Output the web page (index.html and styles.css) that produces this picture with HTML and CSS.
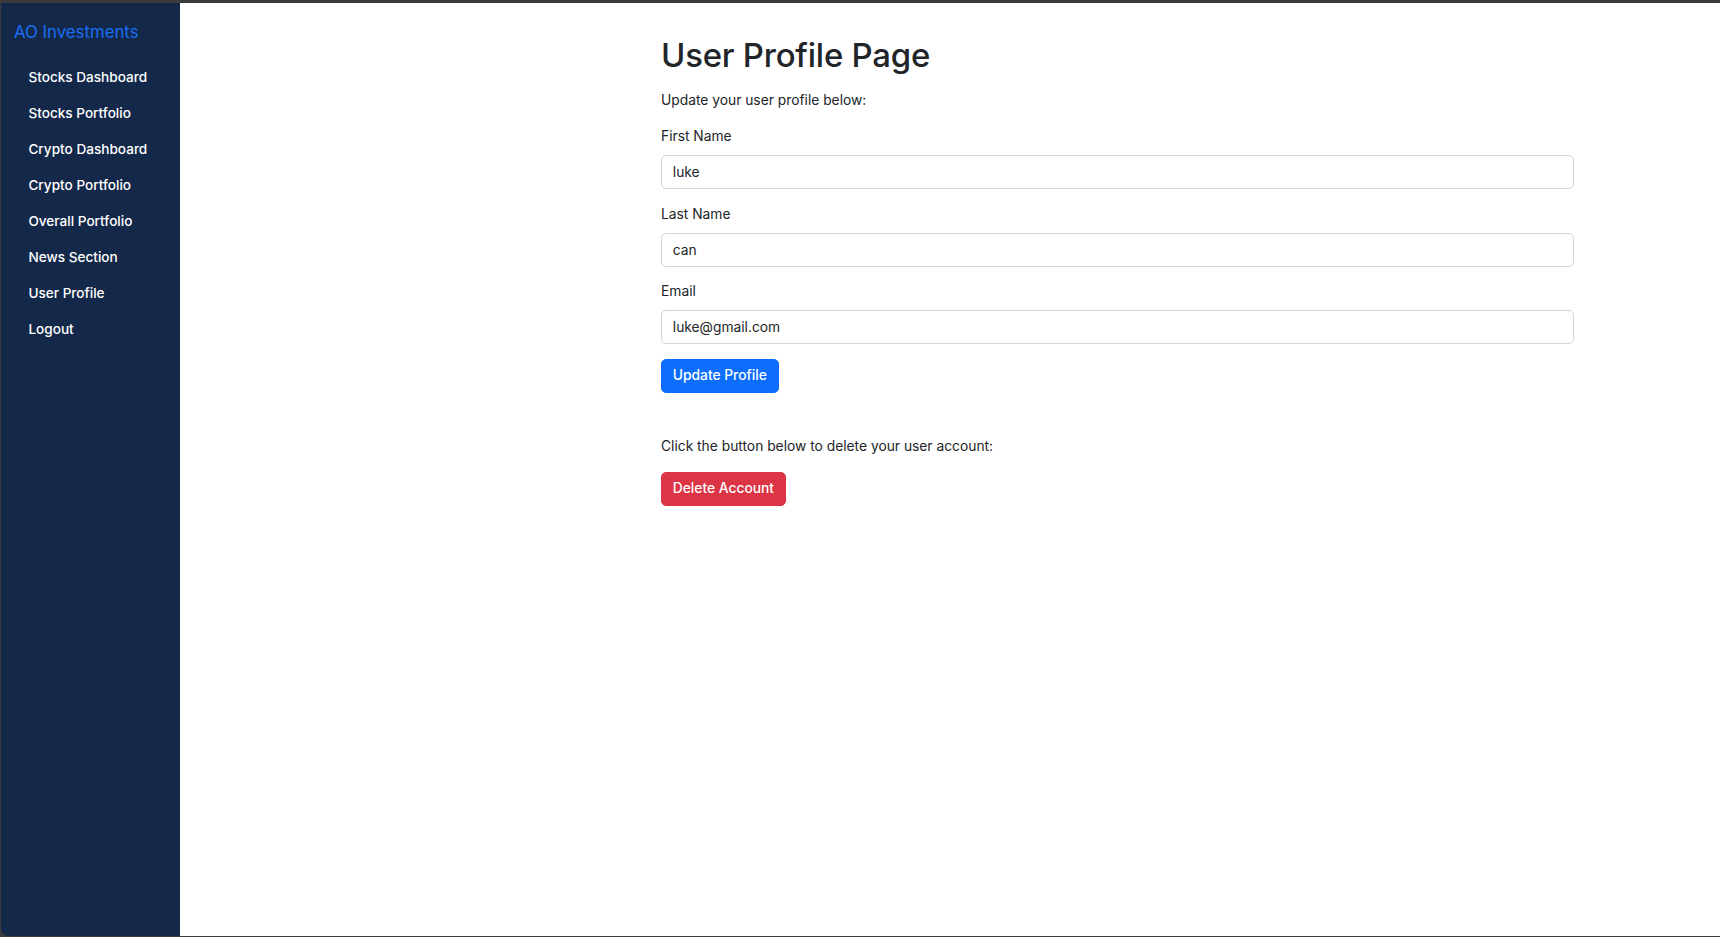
FILE: index.html
```html
<!DOCTYPE html>
<html lang="en">
<head>
<meta charset="utf-8">
<title>User Profile Page</title>
<link rel="stylesheet" href="styles.css">
</head>
<body>
<div class="window">
  <aside class="sidebar">
    <a class="brand" href="#">AO Investments</a>
    <nav class="nav">
      <a class="nav-link" href="#">Stocks Dashboard</a>
      <a class="nav-link" href="#">Stocks Portfolio</a>
      <a class="nav-link" href="#">Crypto Dashboard</a>
      <a class="nav-link" href="#">Crypto Portfolio</a>
      <a class="nav-link" href="#">Overall Portfolio</a>
      <a class="nav-link" href="#">News Section</a>
      <a class="nav-link" href="#">User Profile</a>
      <a class="nav-link" href="#">Logout</a>
    </nav>
  </aside>
  <main class="main">
    <div class="content">
      <h1 class="title">User Profile Page</h1>
      <p class="text">Update your user profile below:</p>
      <form class="form">
        <div class="field">
          <label class="label">First Name</label>
          <input class="input" type="text" value="luke">
        </div>
        <div class="field">
          <label class="label">Last Name</label>
          <input class="input" type="text" value="can">
        </div>
        <div class="field">
          <label class="label">Email</label>
          <input class="input" type="email" value="luke@gmail.com">
        </div>
        <button class="btn btn-primary" type="button">Update Profile</button>
      </form>
      <p class="text delete-text">Click the button below to delete your user account:</p>
      <button class="btn btn-danger" type="button">Delete Account</button>
    </div>
  </main>
</div>
</body>
</html>
```

FILE: styles.css
```css
* { box-sizing: border-box; }

html, body {
  margin: 0;
  padding: 0;
  height: 100%;
}

body {
  background: #3b3b3b;
  font-family: Inter, "Liberation Sans", Arial, sans-serif;
  font-size: 13.8px;
  line-height: 21.6px;
  color: #212529;
}

.window {
  display: flex;
  height: 937px;
  padding-top: 3px;
  padding-left: 1px;
  padding-bottom: 1px;
  background: #3b3b3b;
}

.sidebar {
  width: 179px;
  flex: none;
  background: #14284a;
  padding: 19px 0 0 13px;
  display: flex;
  flex-direction: column;
  border-bottom-left-radius: 8px;
}

.brand {
  color: #1a6ef5;
  text-decoration: none;
  font-size: 16.8px;
  line-height: 21.6px;
  margin-bottom: 16px;
}

.nav {
  display: flex;
  flex-direction: column;
}

.nav-link {
  color: #ffffff;
  text-decoration: none;
  padding: 7.2px 14.4px;
  font-size: 13.6px;
  font-weight: 500;
}

.main {
  flex: 1;
  background: #ffffff;
  padding: 31px 0 0 481px;
}

.content {
  width: 913px;
}

.title {
  margin: 0 0 13px;
  font-size: 32.9px;
  line-height: 43.2px;
  font-weight: 500;
  letter-spacing: -0.2px;
}

.text {
  margin: 0 0 14.4px;
}

.field {
  margin-bottom: 14.4px;
}

.label {
  display: block;
  margin-bottom: 7.2px;
}

.input {
  display: block;
  width: 100%;
  height: 34.4px;
  padding: 5.4px 10.8px;
  font-family: inherit;
  font-size: 13.8px;
  line-height: 21.6px;
  color: #212529;
  border: 1px solid #d3d5d9;
  border-radius: 5px;
  background: #fff;
  outline: none;
}

.btn {
  font-family: inherit;
  font-size: 13.8px;
  line-height: 21.6px;
  font-weight: 500;
  color: #fff;
  border: 1px solid transparent;
  border-radius: 5px;
  padding: 5.4px 10.8px;
  height: 34.4px;
  cursor: pointer;
}

.btn-primary {
  background: #0d6efd;
  border-color: #0d6efd;
}

.btn-danger {
  background: #dc3545;
  border-color: #dc3545;
}

.delete-text {
  margin-top: 42.4px;
}
```
